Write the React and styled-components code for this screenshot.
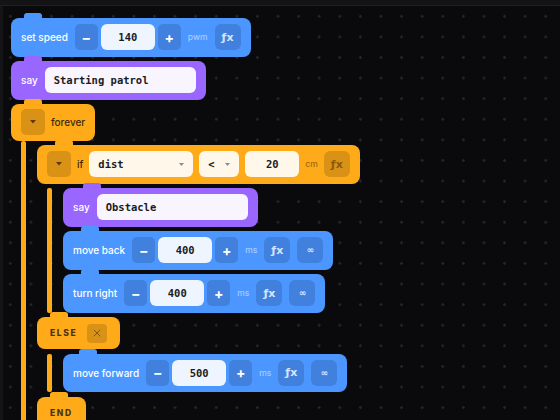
import React from "react"
import styled, { createGlobalStyle } from "styled-components"
import { X } from "lucide-react"

const GlobalStyle = createGlobalStyle`
  html, body {
    margin: 0;
    padding: 0;
    background: #0a0a0c;
  }
  body {
    font-family: Inter, "Noto Sans", sans-serif;
    -webkit-font-smoothing: antialiased;
  }
`

const tones = {
  motion: {
    bg: "#4c97ff",
    btn: "#4180dc",
    field: "#eef5ff",
    text: "#ffffff",
    unit: "#a8cbff",
    glyph: "#d6e6ff",
  },
  looks: {
    bg: "#9966ff",
    btn: "#8255dc",
    field: "#f8f5ff",
    text: "#ffffff",
    unit: "#d2c0ff",
    glyph: "#efe6ff",
  },
  control: {
    bg: "#ffab19",
    btn: "#d99216",
    field: "#fff8ea",
    text: "#3d2906",
    unit: "#9c6a12",
    glyph: "#8a5a0c",
  },
}

const Shell = styled.div`
  display: flex;
  flex-direction: column;
  height: 100vh;
  overflow: hidden;
`

const TopBar = styled.div`
  height: 5px;
  flex-shrink: 0;
  background: #141417;
  border-bottom: 1px solid #1f1f23;
`

const Canvas = styled.div`
  flex: 1;
  overflow: hidden;
  padding: 12px 0 0 8px;
  border-left: 3px solid #141417;
  background-color: #0a0a0c;
  background-image: radial-gradient(circle at center, #26262b 0 1px, transparent 1.6px);
  background-size: 20.6px 20.6px;
  background-position: -3px 0;
`

const Stack = styled.div`
  display: flex;
  flex-direction: column;
  gap: 4.5px;
`

const Branch = styled.div`
  display: flex;
  gap: 11px;
  padding-left: 10px;
`

const Arm = styled.div`
  width: 5px;
  flex-shrink: 0;
  margin-top: ${(p) => (p.$joined ? "-4.5px" : "0")};
  border-radius: 2px;
  background: ${(p) => p.$tone.bg};
`

const Block = styled.div`
  position: relative;
  align-self: flex-start;
  display: flex;
  align-items: center;
  gap: ${(p) => p.$gap || 7}px;
  height: ${(p) => p.$h || 38.5}px;
  padding: 0 ${(p) => p.$pad || 10}px;
  border-radius: 8px;
  background: ${(p) => p.$tone.bg};

  /* connector notch on top of each block */
  &::before {
    content: "";
    position: absolute;
    left: ${(p) => p.$notch || 13}px;
    top: -5px;
    width: 18px;
    height: 6px;
    border-radius: 3px 3px 0 0;
    background: ${(p) => p.$tone.bg};
  }
`

const Label = styled.span`
  font-size: 10px;
  font-weight: 500;
  color: ${(p) => p.$tone.text};
  white-space: nowrap;
`

const Unit = styled.span`
  font-size: 8.5px;
  font-weight: 500;
  color: ${(p) => p.$tone.unit};
`

const Keyword = styled.span`
  font-size: 8.5px;
  font-weight: 800;
  letter-spacing: 1.6px;
  color: #4a3310;
`

const Stepper = styled.div`
  display: flex;
  gap: 3px;
`

const StepBtn = styled.div`
  width: 23px;
  height: 26px;
  display: grid;
  place-items: center;
  border-radius: 5px;
  background: ${(p) => p.$tone.btn};
  color: #ffffff;
  font-size: 14px;
  font-weight: 700;
`

const Field = styled.div`
  display: flex;
  align-items: center;
  justify-content: ${(p) => p.$align || "center"};
  width: ${(p) => p.$w || 54}px;
  height: 26px;
  padding: 0 ${(p) => (p.$align ? 9 : 0)}px;
  box-sizing: border-box;
  border-radius: 6px;
  background: ${(p) => p.$tone.field};
  color: #1b1b1d;
  font-family: "DejaVu Sans Mono", "Liberation Mono", monospace;
  font-size: 10.5px;
  font-weight: 700;
  white-space: nowrap;
`

const IconBtn = styled.div`
  width: 26px;
  height: 26px;
  display: grid;
  place-items: center;
  border-radius: 6px;
  background: ${(p) => p.$tone.btn};
  color: ${(p) => p.$tone.glyph};
  font-family: "DejaVu Sans", sans-serif;
  font-size: ${(p) => (p.$small ? 9 : 11)}px;
  font-weight: 600;
`

const Toggle = styled.div`
  width: 24px;
  height: 26px;
  display: grid;
  place-items: center;
  border-radius: 5px;
  background: ${(p) => p.$tone.btn};
`

const CloseBtn = styled.div`
  width: 20px;
  height: 19px;
  display: grid;
  place-items: center;
  border-radius: 4px;
  background: ${(p) => p.$tone.btn};
  color: #6b4a10;
`

const Caret = ({ color, w = 6 }) => (
  <svg width={w} height={w * 0.6} viewBox="0 0 10 6">
    <polygon points="0,0 10,0 5,6" fill={color} />
  </svg>
)

const NumberBlock = ({ tone, label, value, unit, loop, notch }) => (
  <Block $tone={tone} $notch={notch}>
    <Label $tone={tone}>{label}</Label>
    <Stepper>
      <StepBtn $tone={tone}>−</StepBtn>
      <Field $tone={tone}>{value}</Field>
      <StepBtn $tone={tone}>+</StepBtn>
    </Stepper>
    <Unit $tone={tone}>{unit}</Unit>
    <IconBtn $tone={tone}>ƒx</IconBtn>
    {loop && (
      <IconBtn $tone={tone} $small>
        ∞
      </IconBtn>
    )}
  </Block>
)

const SayBlock = ({ text, notch }) => (
  <Block $tone={tones.looks} $notch={notch}>
    <Label $tone={tones.looks}>say</Label>
    <Field $tone={tones.looks} $w={151} $align="flex-start">
      {text}
    </Field>
  </Block>
)

export default function App() {
  const { motion, control } = tones
  return (
    <Shell>
      <GlobalStyle />
      <TopBar />
      <Canvas>
        <Stack>
          <NumberBlock tone={motion} label="set speed" value="140" unit="pwm" />
          <SayBlock text="Starting patrol" />
          <Block $tone={control} $h={36.5} $gap={6}>
            <Toggle $tone={control}>
              <Caret color="#5a3b06" />
            </Toggle>
            <Label $tone={control}>forever</Label>
          </Block>
          <Branch>
            <Arm $tone={control} $joined />
            <Stack>
              <Block $tone={control} $gap={6} $notch={18}>
                <Toggle $tone={control}>
                  <Caret color="#5a3b06" />
                </Toggle>
                <Label $tone={control}>if</Label>
                <Field $tone={control} $w={104} $align="space-between">
                  dist
                  <Caret color="#8c8c8c" w={5} />
                </Field>
                <Field $tone={control} $w={40} $align="space-between">
                  &lt;
                  <Caret color="#8c8c8c" w={5} />
                </Field>
                <Field $tone={control}>20</Field>
                <Unit $tone={control}>cm</Unit>
                <IconBtn $tone={control}>ƒx</IconBtn>
              </Block>
              <Branch>
                <Arm $tone={control} />
                <Stack>
                  <SayBlock text="Obstacle" notch={20} />
                  <NumberBlock tone={motion} label="move back" value="400" unit="ms" loop notch={18} />
                  <NumberBlock tone={motion} label="turn right" value="400" unit="ms" loop notch={18} />
                </Stack>
              </Branch>
              <Block $tone={control} $h={32} $pad={13} $gap={10}>
                <Keyword>ELSE</Keyword>
                <CloseBtn $tone={control}>
                  <X size={12} strokeWidth={1.6} />
                </CloseBtn>
              </Block>
              <Branch>
                <Arm $tone={control} />
                <Stack>
                  <NumberBlock tone={motion} label="move forward" value="500" unit="ms" loop notch={16} />
                </Stack>
              </Branch>
              <Block $tone={control} $h={32} $pad={13}>
                <Keyword>END</Keyword>
              </Block>
            </Stack>
          </Branch>
        </Stack>
      </Canvas>
    </Shell>
  )
}
